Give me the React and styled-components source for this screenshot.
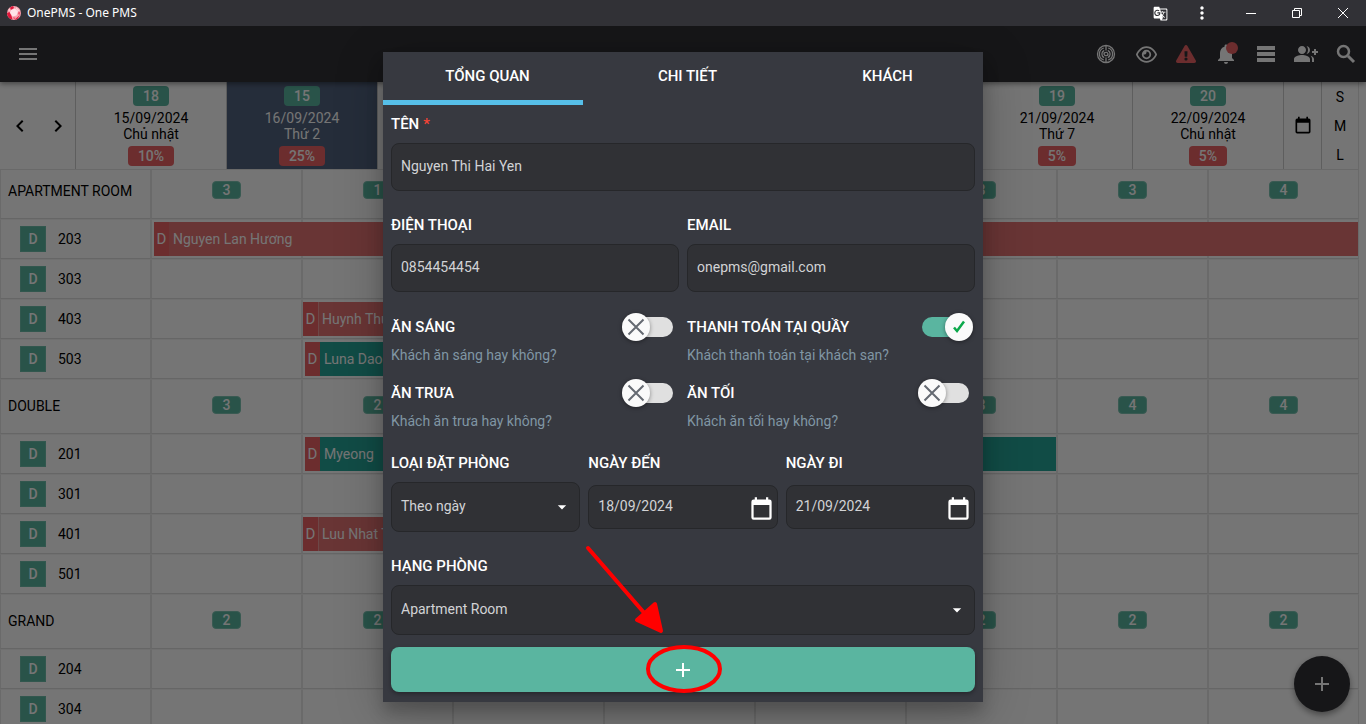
import React, { useState } from 'react';
import styled, { createGlobalStyle } from 'styled-components';
import { MdMenu, MdNotifications, MdGroupAdd, MdAdd, MdChevronLeft, MdChevronRight, MdMoreVert, MdGTranslate, MdArrowDropDown } from 'react-icons/md';
import { FaExclamationTriangle } from 'react-icons/fa';
import { FaRegEye } from 'react-icons/fa6';

const GlobalStyle = createGlobalStyle`
  * {
    box-sizing: border-box;
  }
  body {
    margin: 0;
    overflow: hidden;
    background-color: #FFFFFF;
    font-family: Roboto, "Liberation Sans", sans-serif;
    font-size: 14px;
    line-height: 16px;
  }
  button, input, select {
    font: inherit;
    color: inherit;
  }
  button {
    padding: 0;
    border: 0;
    background: none;
    cursor: pointer;
  }
`;

const Window = styled.div`
  display: flex;
  flex-direction: column;
  height: 100vh;
`;

const TitleBar = styled.div`
  display: flex;
  align-items: center;
  flex: none;
  height: 26px;
  padding-left: 6px;
  gap: 5px;
  background-color: #313136;
  color: #FFFFFF;
  font-family: "Noto Sans", sans-serif;
  font-size: 12px;
`;

const WindowTitle = styled.span`
  flex: 1;
`;

const TitleButton = styled.button`
  display: flex;
  align-items: center;
  justify-content: center;
  width: ${props => (props.$wide ? 46 : 42)}px;
  height: 26px;
`;

const TitleButtons = styled.div`
  display: flex;
`;

const Page = styled.div`
  position: relative;
  display: flex;
  flex-direction: column;
  flex: 1;
  min-height: 0;
  overflow: hidden;
`;

const Toolbar = styled.header`
  display: flex;
  align-items: center;
  justify-content: space-between;
  flex: none;
  height: 56px;
  padding: 0 8px 0 16px;
  background-color: #313136;
  color: #FFFFFF;
  z-index: 2;
  box-shadow: 0 2px 5px rgba(0, 0, 0, 0.4);
`;

const ToolbarActions = styled.div`
  display: flex;
  gap: 16px;
`;

const IconButton = styled.button`
  position: relative;
  display: flex;
  align-items: center;
  justify-content: center;
  width: 24px;
  height: 24px;
  color: ${props => (props.$alert ? '#EB6264' : 'inherit')};
`;

const AlertDot = styled.span`
  position: absolute;
  top: 0;
  right: 0;
  width: 12px;
  height: 12px;
  border-radius: 50%;
  background-color: #EB6264;
`;

const DayStrip = styled.div`
  display: flex;
  flex: none;
  height: 88px;
  margin-right: 7px;
  background-color: #FFFFFF;
  border-bottom: 1px solid #E4E4E4;
  z-index: 1;
`;

const StripSide = styled.div`
  display: flex;
  flex-direction: ${props => (props.$column ? 'column' : 'row')};
  align-items: center;
  justify-content: space-around;
  flex: none;
  width: ${props => props.$width}px;
  border-right: 1px solid ${props => (props.$column ? '#E4E4E4' : '#CCCCCC')};
`;

const StripArrows = styled(StripSide)`
  justify-content: center;
  gap: 14px;
  padding-left: 2px;
`;

const Day = styled.div`
  display: flex;
  flex-direction: column;
  align-items: center;
  flex: 1;
  padding-top: 4px;
  border-right: 1px solid #CCCCCC;
  background-color: ${props => (props.$active ? '#52627E' : 'transparent')};
  color: ${props => (props.$active ? '#FFFFFF' : '#000000')};
`;

const DayText = styled.div`
  margin: 4px 0;
  text-align: center;
`;

const Pill = styled.span`
  display: inline-block;
  height: ${props => (props.$small ? 18 : 20)}px;
  padding: 0 ${props => (props.$small ? 10 : 9)}px;
  border: 1px solid ${props => (props.$small ? '#7CC4B3' : 'transparent')};
  border-radius: 4px;
  background-color: ${props => (props.$red ? '#EB6264' : '#5AB5A0')};
  color: #FFFFFF;
  font-weight: 500;
  line-height: ${props => (props.$small ? 16 : 18)}px;
`;

const Schedule = styled.table`
  width: calc(100% - 7px);
  margin-top: -6px;
  border-collapse: separate;
  border-spacing: 0;
  table-layout: fixed;

  th, td {
    padding: 0;
    border: 1px solid #E6E6E6;
    border-top-color: #F4F4F4;
    border-bottom-color: #DEDEDE;
    font-weight: 400;
  }
`;

const GroupRow = styled.tr`
  height: 55px;
  text-align: center;

  th {
    padding: 0 0 1px 7px;
    text-align: left;
  }

  td {
    padding-bottom: 3px;
  }
`;

const RoomRow = styled.tr`
  height: 40px;
`;

const RoomLabel = styled.div`
  display: flex;
  align-items: center;
  gap: 12px;
  padding-left: 19px;
`;

const RoomState = styled.span`
  width: 26px;
  border: 1px solid #6DBDAA;
  background-color: #5AB5A0;
  color: #FFFFFF;
  font-weight: 500;
  line-height: 24px;
  text-align: center;
`;

const BookingCell = styled.td`
  position: relative;
`;

/* bookings span several day cells, each with 2px of borders */
const Booking = styled.div`
  position: absolute;
  top: 2px;
  left: ${props => props.$start}px;
  display: flex;
  z-index: 1;
  width: calc(${props => props.$days * 100}% + ${props => (props.$days * 2) - 4}px);
  height: 34px;
  background-color: ${props => (props.$green ? '#26A69A' : '#E57373')};
  color: #FFFFFF;
  line-height: 34px;
  white-space: nowrap;
`;

const BookingState = styled.span`
  width: 15px;
  margin-right: 4px;
  background-color: #EB6264;
  font-size: 15px;
  text-align: center;
  box-shadow: ${props => (props.$lined ? '1px 0 #EE9C9C' : 'none')};
`;

const AddButton = styled.button`
  position: absolute;
  right: 16px;
  bottom: 12px;
  z-index: 1;
  display: flex;
  align-items: center;
  justify-content: center;
  width: 56px;
  height: 56px;
  border-radius: 50%;
  background-color: #313136;
  color: #FFFFFF;
  box-shadow: 0 3px 6px rgba(0, 0, 0, 0.4);
`;

const Backdrop = styled.div`
  position: absolute;
  inset: 0;
  z-index: 3;
  display: flex;
  align-items: flex-start;
  justify-content: center;
  padding-top: 26px;
  background-color: rgba(0, 0, 0, 0.54);
`;

const Dialog = styled.div`
  position: relative;
  width: 600px;
  max-width: 100%;
  padding-bottom: 10px;
  background-color: #373940;
  color: #FFFFFF;
  box-shadow: 0 11px 15px rgba(0, 0, 0, 0.2), 0 9px 46px rgba(0, 0, 0, 0.22);
`;

const Tabs = styled.div`
  display: flex;
`;

const Tab = styled.button`
  flex: 1;
  height: 53px;
  padding-left: 9px;
  border-bottom: 5px solid ${props => (props.$active ? '#56BFE8' : 'transparent')};
  font-size: 15px;
  font-weight: 500;
  text-transform: uppercase;
`;

const Form = styled.form`
  display: flex;
  flex-direction: column;
  padding: 11px 8px 0;
`;

const FormRow = styled.div`
  display: grid;
  grid-template-columns: repeat(${props => props.$columns}, minmax(0, 1fr));
  gap: 8px;
  margin-bottom: ${props => props.$bottom}px;
`;

const Field = styled.div`
  display: flex;
  flex-direction: column;
  gap: 11px;
`;

const Label = styled.label`
  display: flex;
  gap: 4px;
  font-size: 15px;
  font-weight: 500;
  text-transform: uppercase;
`;

const Required = styled.span`
  color: #F44336;
`;

const Control = styled.div`
  display: flex;
  align-items: center;
  height: ${props => props.$height}px;
  border: 1px solid #26272A;
  border-radius: 8px;
  background-color: #303135;
  color: #D2D3D5;
`;

const DateControl = styled(Control)`
  margin: 3px 0;
  padding-right: 2px;

  svg {
    flex: none;
    margin-top: 4px;
    color: #FFFFFF;
  }
`;

const Input = styled.input`
  flex: 1;
  min-width: 0;
  height: 100%;
  padding: 0 9px 2px;
  border: 0;
  outline: 0;
  background: none;
`;

const SelectArrow = styled(MdArrowDropDown)`
  flex: none;
  margin-left: -28px;
  margin-right: 7px;
  color: #FFFFFF;
  pointer-events: none;
`;

const Select = styled.select`
  flex: 1;
  min-width: 0;
  height: 100%;
  padding: 0 9px 2px;
  border: 0;
  outline: 0;
  appearance: none;
  background: none;
`;

const SwitchField = styled.div`
  display: flex;
  flex-direction: column;
  gap: 6px;
`;

const SwitchLine = styled.div`
  display: flex;
  align-items: center;
  justify-content: space-between;
  height: 28px;
  padding-right: 6px;
`;

const Hint = styled.p`
  margin: 0;
  color: #8096A4;
`;

const SwitchTrack = styled.span`
  position: relative;
  width: 47px;
  height: 20px;
  border-radius: 10px;
  background-color: ${props => (props.$on ? '#5AB5A0' : '#E0E0E0')};
`;

const SwitchInput = styled.input`
  position: absolute;
  inset: 0;
  z-index: 1;
  width: 100%;
  height: 100%;
  margin: 0;
  opacity: 0;
  cursor: pointer;
`;

const SwitchThumb = styled.span`
  position: absolute;
  top: -4px;
  ${props => (props.$on ? 'right' : 'left')}: -4px;
  display: flex;
  align-items: center;
  justify-content: center;
  width: 28px;
  height: 28px;
  border-radius: 50%;
  background-color: #FAFAFA;
  box-shadow: 0 1px 4px rgba(0, 0, 0, 0.4);
`;

const SubmitButton = styled.button`
  display: flex;
  align-items: center;
  justify-content: center;
  height: 45px;
  border-radius: 8px;
  background-color: #5AB5A0;
  box-shadow: 0 2px 4px rgba(0, 0, 0, 0.3);
`;

const Pointer = styled.svg`
  position: absolute;
  right: 256px;
  bottom: 4px;
  pointer-events: none;
`;

const days = [
  { free: 18, date: '15/09/2024', name: 'Chủ nhật', used: '10%' },
  { free: 15, date: '16/09/2024', name: 'Thứ 2', used: '25%', active: true },
  { free: 16, date: '17/09/2024', name: 'Thứ 3', used: '20%' },
  { free: 17, date: '18/09/2024', name: 'Thứ 4', used: '15%' },
  { free: 17, date: '19/09/2024', name: 'Thứ 5', used: '15%' },
  { free: 17, date: '20/09/2024', name: 'Thứ 6', used: '15%' },
  { free: 19, date: '21/09/2024', name: 'Thứ 7', used: '5%' },
  { free: 20, date: '22/09/2024', name: 'Chủ nhật', used: '5%' },
];

const groups = [
  {
    name: 'Apartment Room',
    free: [3, 1, 2, 3, 3, 3, 3, 4],
    rooms: [
      { number: '203', booking: { guest: 'Nguyen Lan Hương', day: 0, start: 2, days: 8 } },
      { number: '303' },
      { number: '403', booking: { guest: 'Huynh Thu', day: 1, start: 0, days: 2, lined: true } },
      { number: '503', booking: { guest: 'Luna Dao', day: 1, start: 2, days: 2, green: true } },
    ],
  },
  {
    name: 'Double',
    free: [3, 2, 2, 3, 3, 3, 4, 4],
    rooms: [
      { number: '201', booking: { guest: 'Myeong', day: 1, start: 2, days: 5, green: true } },
      { number: '301' },
      { number: '401', booking: { guest: 'Luu Nhat Tan', day: 1, start: 0, days: 2, lined: true } },
      { number: '501' },
    ],
  },
  {
    name: 'Grand',
    free: [2, 2, 2, 2, 2, 2, 2, 2],
    rooms: [{ number: '204' }, { number: '304' }],
  },
];

const CalendarIcon = ({ size }) => (
  <svg width={size} height={size} viewBox="0 0 24 24" fill="currentColor" aria-hidden="true">
    <path d="M19 19H5V8h14v11zM16 1v2H8V1H6v2H5a2 2 0 0 0-2 2v14a2 2 0 0 0 2 2h14a2 2 0 0 0 2-2V5a2 2 0 0 0-2-2h-1V1h-2z" />
  </svg>
);

const Logo = () => (
  <svg width="16" height="16" viewBox="0 0 16 16" aria-hidden="true">
    <circle cx="8" cy="8" r="7" fill="#F7A3B0" />
    <path d="M1 8l2.500-1 2 4 1 3.500A7 7 0 0 1 1 8zM4 2.500l3-1.500 1 2-3 2zM11 12.500l3-2.500-2.500 4-3 1z" fill="#E0163A" />
    <path d="M5 5l4-1.500 3 3-1.500 4-4 1-2.500-4z" fill="#FFE3E8" />
    <path d="M10 2l4 4-2 .5-2-2.500zM2 5l2-1v2z" fill="#FFD3DA" />
    <path d="M12.500 6.500l2 1-1 2.500-1.500-1zM7 12l3 1-2 1.500z" fill="#F0566F" />
  </svg>
);

const RadarIcon = () => (
  <svg width="20" height="20" viewBox="0 0 20 20" fill="none" stroke="currentColor" strokeWidth="1.3" aria-hidden="true">
    <circle cx="10" cy="10" r="8.500" />
    <path d="M7.800 4a6.300 6.300 0 0 0 0 12M12.200 4a6.300 6.300 0 0 1 0 12M8.200 6.300a4.100 4.100 0 0 0 0 7.400M11.800 6.300a4.100 4.100 0 0 1 0 7.400" />
    <path d="M10 1.500v5M10 13.500v5M8 10.500a2 2 0 1 1 3.500 1.200M12 9.500a2 2 0 1 1-3.500-1.200" />
  </svg>
);

const RowsIcon = () => (
  <svg width="24" height="24" viewBox="0 0 24 24" fill="currentColor" aria-hidden="true">
    <path d="M3 4h18v4H3zM3 10h18v4H3zM3 16h18v4H3z" />
  </svg>
);

const SearchIcon = () => (
  <svg width="24" height="24" viewBox="0 0 24 24" fill="none" stroke="currentColor" aria-hidden="true">
    <circle cx="9.500" cy="9.500" r="5.500" strokeWidth="2.500" />
    <path d="M14 14l6 6" strokeWidth="3" />
  </svg>
);

const Switch = ({ id, label, hint, defaultOn }) => {
  const [on, setOn] = useState(Boolean(defaultOn));
  return (
    <SwitchField>
      <SwitchLine>
        <Label htmlFor={id}>{label}</Label>
        <SwitchTrack $on={on}>
          <SwitchInput id={id} type="checkbox" checked={on} onChange={() => setOn(!on)} />
          <SwitchThumb $on={on}>
            <svg width="18" height="18" viewBox="0 0 18 18" fill="none" strokeWidth="2" aria-hidden="true">
              {on
                ? <path d="M4 9.500l3 3.500L14 3.500" stroke="#0BA84A" strokeWidth="2.500" />
                : <path d="M1.500 1.500l15 15M16.500 1.500l-15 15" stroke="#656A72" />}
            </svg>
          </SwitchThumb>
        </SwitchTrack>
      </SwitchLine>
      <Hint>{hint}</Hint>
    </SwitchField>
  );
};

const DateField = ({ id, label, value }) => (
  <Field>
    <Label htmlFor={id}>{label}</Label>
    <DateControl $height={44}>
      <Input id={id} defaultValue={value} />
      <CalendarIcon size={27} />
    </DateControl>
  </Field>
);

const SelectField = ({ id, label, option }) => (
  <Field>
    <Label htmlFor={id}>{label}</Label>
    <Control $height={50}>
      <Select id={id}>
        <option>{option}</option>
      </Select>
      <SelectArrow size={20} />
    </Control>
  </Field>
);

const RoomSchedule = () => (
  <Schedule>
    {groups.map(group => (
      <tbody key={group.name}>
        <GroupRow>
          <th scope="rowgroup">{group.name.toUpperCase()}</th>
          {group.free.map((free, day) => (
            <td key={days[day].date}><Pill $small>{free}</Pill></td>
          ))}
        </GroupRow>
        {group.rooms.map(({ number, booking }) => (
          <RoomRow key={number}>
            <th scope="row">
              <RoomLabel>
                <RoomState>D</RoomState>
                {number}
              </RoomLabel>
            </th>
            {days.map(({ date }, day) => (
              <BookingCell key={date}>
                {booking && booking.day === day && (
                  <Booking
                    $start={booking.start}
                    $days={booking.days}
                    $green={booking.green}
                  >
                    <BookingState $lined={booking.lined}>D</BookingState>
                    {booking.guest}
                  </Booking>
                )}
              </BookingCell>
            ))}
          </RoomRow>
        ))}
      </tbody>
    ))}
  </Schedule>
);

const BookingDialog = () => (
  <Dialog role="dialog" aria-label="Tổng quan">
    <Tabs role="tablist">
      <Tab role="tab" aria-selected="true" $active>Tổng quan</Tab>
      <Tab role="tab" aria-selected="false">Chi tiết</Tab>
      <Tab role="tab" aria-selected="false">Khách</Tab>
    </Tabs>
    <Form onSubmit={event => event.preventDefault()}>
      <FormRow $columns={1} $bottom={26}>
        <Field>
          <Label htmlFor="name">
            <span>Tên</span>
            <Required>*</Required>
          </Label>
          <Control $height={48}>
            <Input id="name" defaultValue="Nguyen Thi Hai Yen" />
          </Control>
        </Field>
      </FormRow>
      <FormRow $columns={2} $bottom={21}>
        <Field>
          <Label htmlFor="phone">Điện thoại</Label>
          <Control $height={48}>
            <Input id="phone" type="tel" defaultValue="0854454454" />
          </Control>
        </Field>
        <Field>
          <Label htmlFor="email">Email</Label>
          <Control $height={48}>
            <Input id="email" type="email" defaultValue="onepms@gmail.com" />
          </Control>
        </Field>
      </FormRow>
      <FormRow $columns={2} $bottom={16}>
        <Switch id="breakfast" label="Ăn sáng" hint="Khách ăn sáng hay không?" />
        <Switch id="counter" label="Thanh toán tại quầy" hint="Khách thanh toán tại khách sạn?" defaultOn />
      </FormRow>
      <FormRow $columns={2} $bottom={26}>
        <Switch id="lunch" label="Ăn trưa" hint="Khách ăn trưa hay không?" />
        <Switch id="dinner" label="Ăn tối" hint="Khách ăn tối hay không?" />
      </FormRow>
      <FormRow $columns={3} $bottom={26}>
        <SelectField id="kind" label="Loại đặt phòng" option="Theo ngày" />
        <DateField id="arrival" label="Ngày đến" value="18/09/2024" />
        <DateField id="departure" label="Ngày đi" value="21/09/2024" />
      </FormRow>
      <FormRow $columns={1} $bottom={12}>
        <SelectField id="room" label="Hạng phòng" option="Apartment Room" />
      </FormRow>
      <SubmitButton type="submit" aria-label="Thêm">
        <MdAdd size={24} />
      </SubmitButton>
    </Form>
    <Pointer width="144" height="156" viewBox="0 0 144 156" aria-hidden="true">
      <path d="M5 6l58 67" stroke="#FF0000" strokeWidth="4" strokeLinecap="round" />
      <path d="M54 78L72 62l6 27z" fill="#FF0000" stroke="#FF0000" strokeWidth="4" strokeLinejoin="round" />
      <ellipse cx="101" cy="127" rx="36" ry="22" fill="none" stroke="#FF0000" strokeWidth="4" />
    </Pointer>
  </Dialog>
);

const App = () => (
  <>
    <GlobalStyle />
    <Window>
      <TitleBar>
        <Logo />
        <WindowTitle>OnePMS - One PMS</WindowTitle>
        <TitleButtons>
          <TitleButton aria-label="Translate"><MdGTranslate size={15} /></TitleButton>
          <TitleButton aria-label="More"><MdMoreVert size={20} /></TitleButton>
        </TitleButtons>
        <TitleButtons>
          <TitleButton $wide aria-label="Minimize">
            <svg width="10" height="10" stroke="#FFFFFF"><path d="M0 5.500h10" /></svg>
          </TitleButton>
          <TitleButton $wide aria-label="Restore">
            <svg width="10" height="10" fill="none" stroke="#FFFFFF"><path d="M.5 2.500h7v7h-7zM2.500 2.500v-2h7v7h-2" /></svg>
          </TitleButton>
          <TitleButton $wide aria-label="Close">
            <svg width="10" height="10" stroke="#FFFFFF"><path d="M0 0l10 10M10 0L0 10" /></svg>
          </TitleButton>
        </TitleButtons>
      </TitleBar>
      <Page>
        <Toolbar>
          <IconButton aria-label="Menu"><MdMenu size={24} /></IconButton>
          <ToolbarActions>
            <IconButton aria-label="Radar"><RadarIcon /></IconButton>
            <IconButton aria-label="View"><FaRegEye size={21} /></IconButton>
            <IconButton aria-label="Alerts" $alert><FaExclamationTriangle size={20} /></IconButton>
            <IconButton aria-label="Notifications">
              <MdNotifications size={24} />
              <AlertDot />
            </IconButton>
            <IconButton aria-label="List"><RowsIcon /></IconButton>
            <IconButton aria-label="Add guest"><MdGroupAdd size={24} /></IconButton>
            <IconButton aria-label="Search"><SearchIcon /></IconButton>
          </ToolbarActions>
        </Toolbar>
        <DayStrip>
          <StripArrows $width={76}>
            <IconButton aria-label="Previous"><MdChevronLeft size={24} /></IconButton>
            <IconButton aria-label="Next"><MdChevronRight size={24} /></IconButton>
          </StripArrows>
          {days.map(day => (
            <Day key={day.date} $active={day.active}>
              <Pill>{day.free}</Pill>
              <DayText>
                <div>{day.date}</div>
                <div>{day.name}</div>
              </DayText>
              <Pill $red>{day.used}</Pill>
            </Day>
          ))}
          <StripSide $width={38}>
            <IconButton aria-label="Pick a date"><CalendarIcon size={20} /></IconButton>
          </StripSide>
          <StripSide $width={37} $column>
            <button type="button">S</button>
            <button type="button">M</button>
            <button type="button">L</button>
          </StripSide>
        </DayStrip>
        <RoomSchedule />
        <AddButton aria-label="Add"><MdAdd size={24} /></AddButton>
        <Backdrop>
          <BookingDialog />
        </Backdrop>
      </Page>
    </Window>
  </>
);

export default App;
